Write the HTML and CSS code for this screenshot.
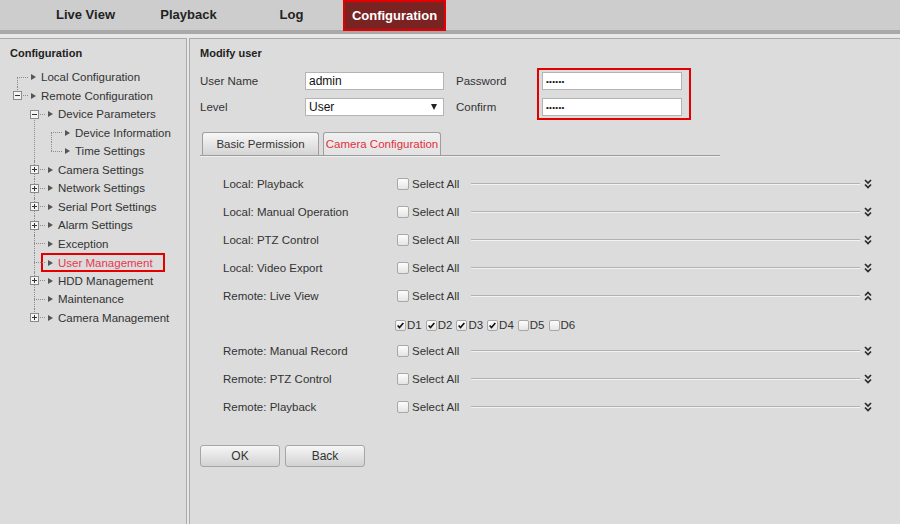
FILE: index.html
```html
<!DOCTYPE html>
<html lang="en">
<head>
    <meta charset="UTF-8">
    <meta name="viewport" content="width=device-width, initial-scale=1.0">
    <title>Configuration - User Management</title>
    <link rel="stylesheet" href="styles.css">
</head>
<body>
    <header class="topbar">
        <nav class="nav">
            <a class="nav-item">Live View</a>
            <a class="nav-item">Playback</a>
            <a class="nav-item">Log</a>
            <a class="nav-item active">Configuration</a>
        </nav>
    </header>

    <div class="layout">
        <aside class="sidebar">
            <div class="side-title">Configuration</div>
            <ul class="tree">
                <li><div class="node"><span class="conn"></span><span class="arrow"></span><span>Local Configuration</span></div></li>
                <li>
                    <div class="node"><span class="conn"><svg class="toggle" viewBox="0 0 9 9"><rect x="0.5" y="0.5" width="8" height="8"/><path d="M2 4.5h5"/></svg></span><span class="arrow"></span><span>Remote Configuration</span></div>
                    <ul>
                        <li>
                            <div class="node"><span class="conn"><svg class="toggle" viewBox="0 0 9 9"><rect x="0.5" y="0.5" width="8" height="8"/><path d="M2 4.5h5"/></svg></span><span class="arrow"></span><span>Device Parameters</span></div>
                            <ul>
                                <li><div class="node"><span class="conn"></span><span class="arrow"></span><span>Device Information</span></div></li>
                                <li><div class="node"><span class="conn"></span><span class="arrow"></span><span>Time Settings</span></div></li>
                            </ul>
                        </li>
                        <li><div class="node"><span class="conn"><svg class="toggle" viewBox="0 0 9 9"><rect x="0.5" y="0.5" width="8" height="8"/><path d="M2 4.5h5M4.5 2v5"/></svg></span><span class="arrow"></span><span>Camera Settings</span></div></li>
                        <li><div class="node"><span class="conn"><svg class="toggle" viewBox="0 0 9 9"><rect x="0.5" y="0.5" width="8" height="8"/><path d="M2 4.5h5M4.5 2v5"/></svg></span><span class="arrow"></span><span>Network Settings</span></div></li>
                        <li><div class="node"><span class="conn"><svg class="toggle" viewBox="0 0 9 9"><rect x="0.5" y="0.5" width="8" height="8"/><path d="M2 4.5h5M4.5 2v5"/></svg></span><span class="arrow"></span><span>Serial Port Settings</span></div></li>
                        <li><div class="node"><span class="conn"><svg class="toggle" viewBox="0 0 9 9"><rect x="0.5" y="0.5" width="8" height="8"/><path d="M2 4.5h5M4.5 2v5"/></svg></span><span class="arrow"></span><span>Alarm Settings</span></div></li>
                        <li><div class="node"><span class="conn"></span><span class="arrow"></span><span>Exception</span></div></li>
                        <li><div class="node"><span class="conn"></span><span class="hl"><span class="arrow"></span><span>User Management</span></span></div></li>
                        <li><div class="node"><span class="conn"><svg class="toggle" viewBox="0 0 9 9"><rect x="0.5" y="0.5" width="8" height="8"/><path d="M2 4.5h5M4.5 2v5"/></svg></span><span class="arrow"></span><span>HDD Management</span></div></li>
                        <li><div class="node"><span class="conn"></span><span class="arrow"></span><span>Maintenance</span></div></li>
                        <li><div class="node"><span class="conn"><svg class="toggle" viewBox="0 0 9 9"><rect x="0.5" y="0.5" width="8" height="8"/><path d="M2 4.5h5M4.5 2v5"/></svg></span><span class="arrow"></span><span>Camera Management</span></div></li>
                    </ul>
                </li>
            </ul>
        </aside>

        <main class="main">
            <div class="title">Modify user</div>

            <div class="user-form">
                <label class="lbl">User Name</label>
                <input class="field" type="text" value="admin">
                <label class="lbl pw-lbl">Password</label>
                <div class="pw-box">
                    <input class="field pw" type="password" value="123456">
                    <input class="field pw" type="password" value="123456">
                </div>
                <label class="lbl">Level</label>
                <div class="field select"><span>User</span><span class="caret"></span></div>
                <label class="lbl pw-lbl">Confirm</label>
            </div>

            <div class="tabs">
                <div class="tab">Basic Permission</div>
                <div class="tab active">Camera Configuration</div>
            </div>

            <div class="perms">
                <div class="perm-row">
                    <span class="perm-name">Local: Playback</span>
                    <span class="check"></span><span class="sel">Select All</span>
                    <span class="line"></span>
                    <svg class="chev" viewBox="0 0 8 10"><path d="M1 1l3 3 3-3M1 5.5l3 3 3-3"/></svg>
                </div>
                <div class="perm-row">
                    <span class="perm-name">Local: Manual Operation</span>
                    <span class="check"></span><span class="sel">Select All</span>
                    <span class="line"></span>
                    <svg class="chev" viewBox="0 0 8 10"><path d="M1 1l3 3 3-3M1 5.5l3 3 3-3"/></svg>
                </div>
                <div class="perm-row">
                    <span class="perm-name">Local: PTZ Control</span>
                    <span class="check"></span><span class="sel">Select All</span>
                    <span class="line"></span>
                    <svg class="chev" viewBox="0 0 8 10"><path d="M1 1l3 3 3-3M1 5.5l3 3 3-3"/></svg>
                </div>
                <div class="perm-row">
                    <span class="perm-name">Local: Video Export</span>
                    <span class="check"></span><span class="sel">Select All</span>
                    <span class="line"></span>
                    <svg class="chev" viewBox="0 0 8 10"><path d="M1 1l3 3 3-3M1 5.5l3 3 3-3"/></svg>
                </div>
                <div class="perm-row">
                    <span class="perm-name">Remote: Live View</span>
                    <span class="check"></span><span class="sel">Select All</span>
                    <span class="line"></span>
                    <svg class="chev" viewBox="0 0 8 10"><path d="M1 4.5l3-3 3 3M1 9l3-3 3 3"/></svg>
                </div>
                <div class="channels">
                    <span class="ch"><span class="check small on"><svg viewBox="0 0 11 11"><path d="M2 5.5l2.3 2.5L9 2.5"/></svg></span>D1</span>
                    <span class="ch"><span class="check small on"><svg viewBox="0 0 11 11"><path d="M2 5.5l2.3 2.5L9 2.5"/></svg></span>D2</span>
                    <span class="ch"><span class="check small on"><svg viewBox="0 0 11 11"><path d="M2 5.5l2.3 2.5L9 2.5"/></svg></span>D3</span>
                    <span class="ch"><span class="check small on"><svg viewBox="0 0 11 11"><path d="M2 5.5l2.3 2.5L9 2.5"/></svg></span>D4</span>
                    <span class="ch"><span class="check small"></span>D5</span>
                    <span class="ch"><span class="check small"></span>D6</span>
                </div>
                <div class="perm-row">
                    <span class="perm-name">Remote: Manual Record</span>
                    <span class="check"></span><span class="sel">Select All</span>
                    <span class="line"></span>
                    <svg class="chev" viewBox="0 0 8 10"><path d="M1 1l3 3 3-3M1 5.5l3 3 3-3"/></svg>
                </div>
                <div class="perm-row">
                    <span class="perm-name">Remote: PTZ Control</span>
                    <span class="check"></span><span class="sel">Select All</span>
                    <span class="line"></span>
                    <svg class="chev" viewBox="0 0 8 10"><path d="M1 1l3 3 3-3M1 5.5l3 3 3-3"/></svg>
                </div>
                <div class="perm-row">
                    <span class="perm-name">Remote: Playback</span>
                    <span class="check"></span><span class="sel">Select All</span>
                    <span class="line"></span>
                    <svg class="chev" viewBox="0 0 8 10"><path d="M1 1l3 3 3-3M1 5.5l3 3 3-3"/></svg>
                </div>
            </div>

            <div class="actions">
                <button class="btn">OK</button>
                <button class="btn">Back</button>
            </div>
        </main>
    </div>
</body>
</html>
```

FILE: styles.css
```css
:root {
    --text-color: #333;
    --panel-bg: #dcdcdc;
    --panel-border: #a9a9a9;
    --red: #e40000;
}

* {
    box-sizing: border-box;
}

html, body {
    height: 100%;
}

body {
    margin: 0;
    font-family: 'Liberation Sans', Arial, sans-serif;
    font-size: 11.5px;
    color: var(--text-color);
    background-color: #e8e8e8;
    display: flex;
    flex-direction: column;
    overflow: hidden;
}

/* top navigation */
.topbar {
    height: 34px;
    background-color: #cdcdcd;
    border-bottom: 4px solid #a9a9a9;
    flex-shrink: 0;
}

.nav {
    display: flex;
    padding-left: 34px;
    height: 30px;
}

.nav-item {
    width: 103px;
    height: 30px;
    line-height: 30px;
    text-align: center;
    font-size: 13px;
    font-weight: bold;
    color: #222;
}

.nav-item.active {
    height: 31px;
    line-height: 27px;
    background-color: #7a2323;
    border: 2px solid var(--red);
    color: #fff;
}

.layout {
    flex: 1;
    display: flex;
    gap: 2px;
    padding-top: 4px;
}

/* sidebar tree */
.sidebar {
    width: 187px;
    flex-shrink: 0;
    background-color: var(--panel-bg);
    border-top: 1px solid var(--panel-border);
    border-right: 1px solid var(--panel-border);
}

.side-title {
    font-size: 11px;
    font-weight: bold;
    padding: 7px 10px 0;
    line-height: 14px;
    color: #222;
}

.tree, .tree ul {
    list-style: none;
    margin: 0;
    padding: 0 0 0 17px;
}

.tree {
    margin-top: 8px;
}

.tree li {
    position: relative;
}

.tree li::before {
    content: "";
    position: absolute;
    left: 0;
    top: 0;
    bottom: 0;
    border-left: 1px dotted #8c8c8c;
}

.tree li:first-child::before {
    top: 9px;
}

.tree li:last-child::before {
    bottom: auto;
    height: 9px;
}

.node {
    display: flex;
    align-items: center;
    height: 18.5px;
    white-space: nowrap;
}

.conn {
    position: relative;
    width: 11px;
    height: 0;
    border-top: 1px dotted #8c8c8c;
    flex-shrink: 0;
}

.toggle {
    position: absolute;
    left: -4px;
    top: -5px;
    width: 9px;
    height: 9px;
}

.toggle rect {
    fill: #f4f4f4;
    stroke: #8a8a8a;
}

.toggle path {
    stroke: #333;
    stroke-width: 1;
}

.arrow {
    width: 0;
    height: 0;
    margin: 0 5px 0 3px;
    border-left: 5px solid #555;
    border-top: 3.5px solid transparent;
    border-bottom: 3.5px solid transparent;
    flex-shrink: 0;
}

.hl {
    display: flex;
    align-items: center;
    color: #e8384f;
    outline: 2px solid var(--red);
    padding: 2px 10px 1px 2px;
    margin: 1px -10px 0 -2px;
}

/* main panel */
.main {
    flex: 1;
    background-color: var(--panel-bg);
    border-top: 1px solid var(--panel-border);
    border-left: 1px solid var(--panel-border);
    padding: 7px 28px 0 10px;
}

.title {
    font-size: 11px;
    font-weight: bold;
    line-height: 14px;
    color: #222;
}

.user-form {
    display: grid;
    grid-template-columns: 105px 139px 12px 81px 154px;
    grid-template-rows: 26px 26px;
    align-items: center;
    margin-top: 8px;
}

.lbl {
    grid-column: 1;
}

.pw-lbl {
    grid-column: 4;
}

.field {
    height: 18px;
    border: 1px solid #b4b4b4;
    background-color: #fff;
    font-family: inherit;
    font-size: 12px;
    padding: 0 3px;
    color: #111;
    outline: none;
}

.pw-box {
    grid-column: 5;
    grid-row: 1 / 3;
    align-self: stretch;
    display: flex;
    flex-direction: column;
    gap: 8px;
    border: 2px solid var(--red);
    padding: 2px 7px 2px 3px;
}

.field.pw {
    width: 140px;
    font-size: 8px;
    letter-spacing: 0.3px;
}

.select {
    display: flex;
    align-items: center;
    justify-content: space-between;
    padding: 0 6px 0 3px;
}

.caret {
    width: 0;
    height: 0;
    border-top: 6px solid #222;
    border-left: 3.5px solid transparent;
    border-right: 3.5px solid transparent;
}

/* tabs */
.tabs {
    display: flex;
    gap: 4px;
    width: 520px;
    margin-top: 12px;
    padding-left: 2px;
    border-bottom: 1px solid #9c9c9c;
    box-shadow: 0 1px 0 #efefef;
}

.tab {
    width: 117px;
    height: 23px;
    line-height: 23px;
    text-align: center;
    white-space: nowrap;
    border: 1px solid #9e9e9e;
    border-bottom: none;
    border-radius: 3px 3px 0 0;
    background: linear-gradient(#f7f7f7, #d4d4d4);
    color: #333;
}

.tab.active {
    width: 118px;
    background: linear-gradient(#f0f0f0, #e2e2e2);
    color: #e3303f;
}

/* permission rows */
.perms {
    margin-top: 14px;
}

.perm-row {
    display: flex;
    align-items: center;
    height: 28px;
    padding-left: 23px;
    white-space: nowrap;
}

.perm-name {
    width: 174px;
}

.check {
    width: 12px;
    height: 12px;
    border: 1px solid #a8a8a8;
    border-radius: 2px;
    background: linear-gradient(#fdfdfd, #e4e4e4);
    flex-shrink: 0;
    margin-right: 3px;
}

.sel {
    width: 59px;
}

.line {
    flex: 1;
    height: 2px;
    border-top: 1px solid #b2b2b2;
    border-bottom: 1px solid #f2f2f2;
}

.chev {
    width: 8px;
    height: 10px;
    margin-left: 4px;
    fill: none;
    stroke: #2a2a2a;
    stroke-width: 1.7;
}

.channels {
    display: flex;
    align-items: center;
    gap: 4px;
    height: 27px;
    padding: 3px 0 0 195px;
}

.ch {
    display: flex;
    align-items: center;
}

.check.small {
    width: 11px;
    height: 11px;
    margin-right: 1px;
}

.check.small svg {
    display: block;
    width: 9px;
    height: 9px;
    fill: none;
    stroke: #111;
    stroke-width: 2;
}

/* buttons */
.actions {
    display: flex;
    gap: 5px;
    margin-top: 24px;
}

.btn {
    width: 80px;
    height: 22px;
    font-family: inherit;
    font-size: 12px;
    color: #333;
    border: 1px solid #a6a6a6;
    border-radius: 3px;
    background: linear-gradient(#f6f6f6, #d2d2d2);
    padding: 0;
}
```
